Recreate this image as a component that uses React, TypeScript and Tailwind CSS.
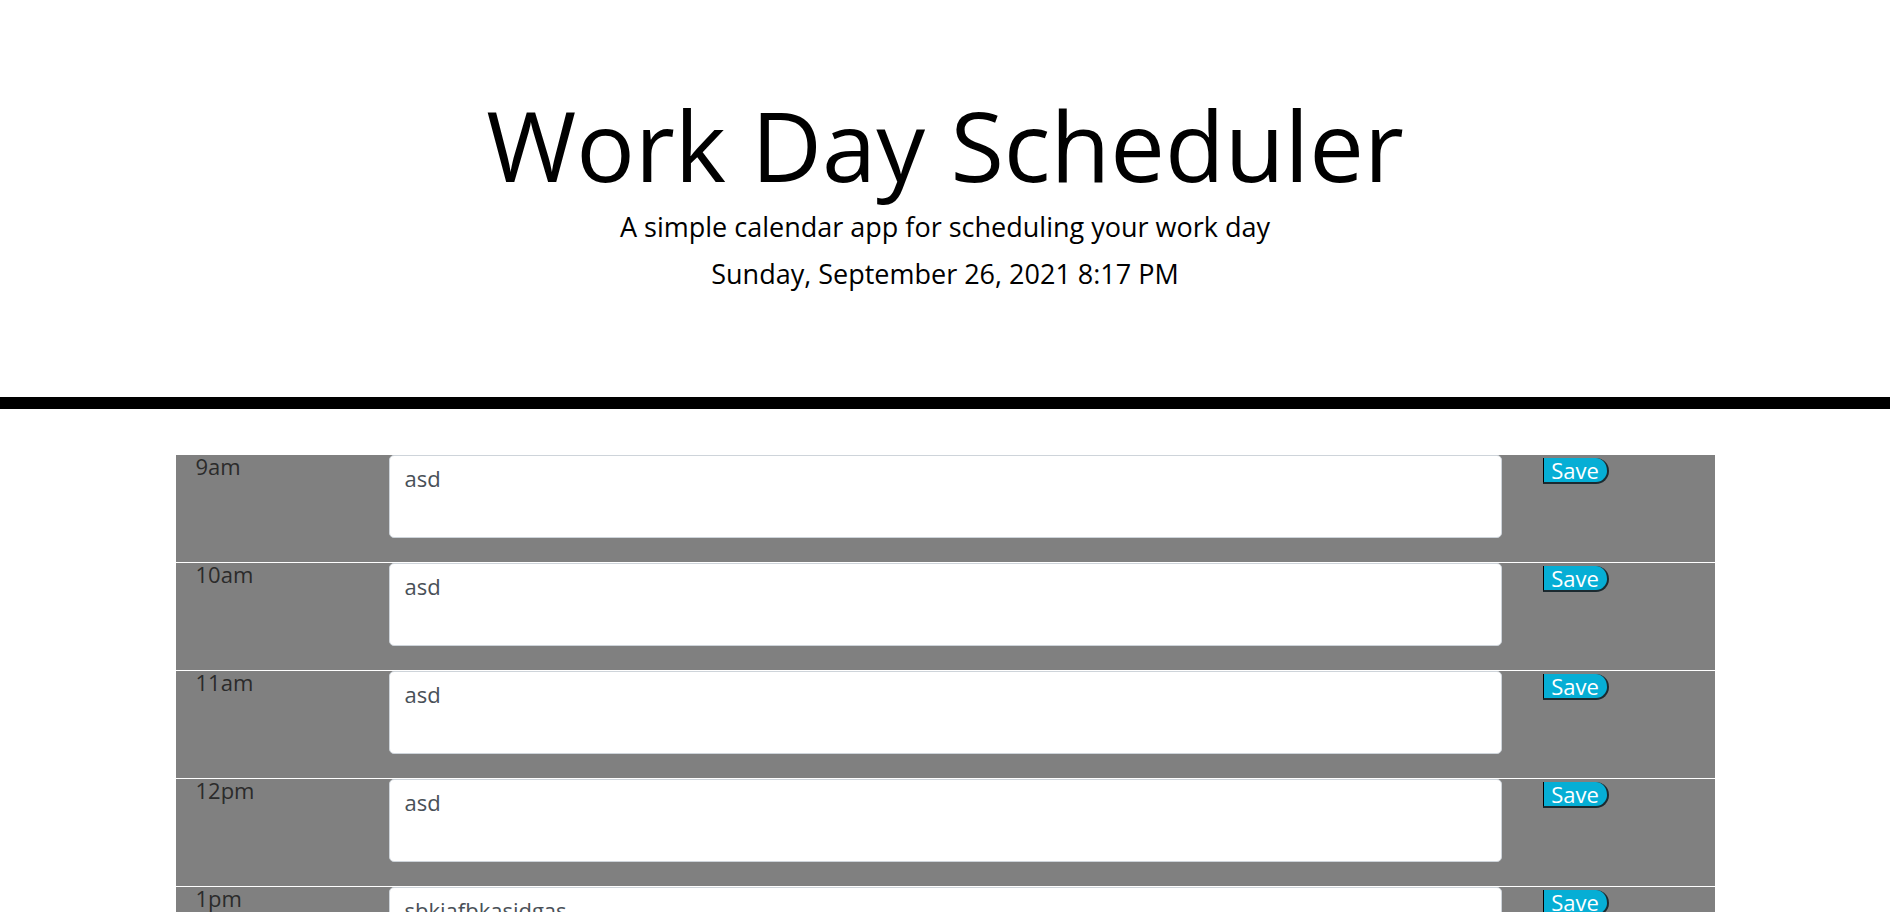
import { useState } from 'react';

const hours = [
  { label: '9am', text: 'asd' },
  { label: '10am', text: 'asd' },
  { label: '11am', text: 'asd' },
  { label: '12pm', text: 'asd' },
  { label: '1pm', text: 'sbkjafbkasjdgas' },
  { label: '2pm', text: '' },
  { label: '3pm', text: '' },
  { label: '4pm', text: '' },
  { label: '5pm', text: '' },
];

function TimeBlock({ label, text }: { label: string; text: string }) {
  const [value, setValue] = useState(text);

  return (
    <div className="flex h-[108px] border-t border-white bg-[#808080]">
      <div className="w-[213px] pl-[20px] text-[22px] leading-none text-[#2b2b2b]">{label}</div>
      <textarea
        value={value}
        onChange={(e) => setValue(e.target.value)}
        className="h-[83px] w-[1113px] resize-none rounded-[5px] border border-[#ced4da] bg-white px-[15px] py-[6px] text-[22px] leading-[1.5] text-[#495057] outline-none"
      />
      <div className="flex-1 pl-[41px] pt-[3px]">
        <button className="flex h-[26px] w-[66px] items-center justify-center rounded-r-[16px] border-b-2 border-l border-r-2 border-t-0 border-b-[#1b2a30] border-l-black border-r-[#1b2a30] bg-[#06aed5] pb-[1px] text-[22px] leading-none text-white">
          Save
        </button>
      </div>
    </div>
  );
}

export default function App() {
  return (
    <div className="min-h-screen bg-white font-['Open_Sans',sans-serif] text-black">
      {/* Jumbotron */}
      <header className="border-b-[12px] border-black pb-[89px] pt-[86px] text-center">
        <h1 className="mb-[10px] text-[97.5px] font-normal leading-[1.2]">Work Day Scheduler</h1>
        <p className="mb-[20px] text-[27px] leading-none">A simple calendar app for scheduling your work day</p>
        <p className="mb-[21px] text-[27px] leading-none">Sunday, September 26, 2021 8:17 PM</p>
      </header>

      <div className="mx-auto mt-[45px] w-[1539px]">
        {hours.map((h) => (
          <TimeBlock key={h.label} label={h.label} text={h.text} />
        ))}
      </div>
    </div>
  );
}
